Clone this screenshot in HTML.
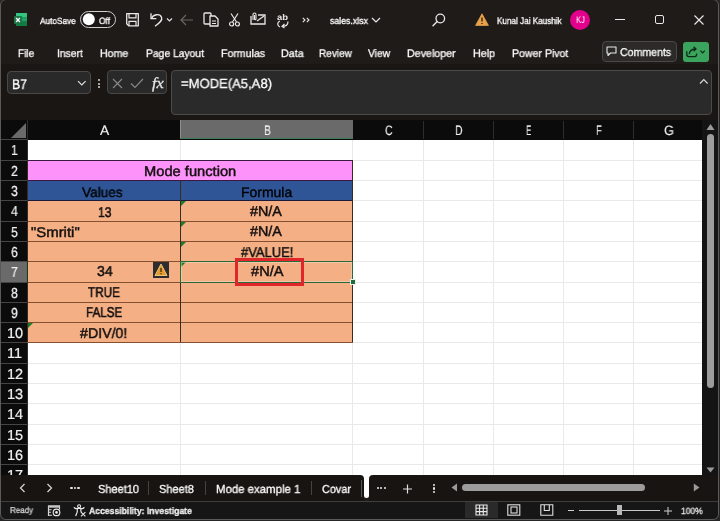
<!DOCTYPE html>
<html><head><meta charset="utf-8"><style>
html,body{margin:0;padding:0;}
body{width:720px;height:521px;position:relative;overflow:hidden;font-family:"Liberation Sans",sans-serif;text-rendering:geometricPrecision;}
div{position:absolute;}
.t{white-space:nowrap;will-change:transform;}
svg{overflow:visible;}
</style></head><body>
<div class="" style="left:0px;top:0px;width:720px;height:521px;background:#262626;"></div>
<div class="" style="left:0px;top:-1px;width:719px;height:521px;background:#1f1b18;border:1px solid #5c5a58;border-radius:6px;box-sizing:border-box;overflow:hidden;"></div>
<svg style="position:absolute;left:13px;top:12px;" width="15" height="15" viewBox="0 0 15 15"><rect x="3" y="1" width="11" height="13" rx="1" fill="#185c37"/><rect x="3" y="1" width="11" height="4.3" fill="#33c481" /><rect x="3" y="5.3" width="11" height="4.3" fill="#21a366" /><rect x="3" y="9.6" width="11" height="4.4" fill="#107c41" /><rect x="1" y="4" width="8" height="8" rx="0.8" fill="#1a7443"/><path d="M3.1 6 L6.9 10 M6.9 6 L3.1 10" stroke="#fff" stroke-width="1.3"/></svg>
<div class="t" style="left:39.60px;top:15.89px;font-size:9.01px;line-height:10.36px;color:#ffffff;font-weight:normal;font-style:normal;font-family:'Liberation Sans',sans-serif;transform:scaleX(0.9162);transform-origin:0 0;-webkit-text-stroke:0.3px currentColor;">AutoSave</div>
<div class="" style="left:80px;top:11px;width:36px;height:17px;border:1.5px solid #cfcfcf;border-radius:9px;box-sizing:border-box;background:#1a1716;"></div>
<svg style="position:absolute;left:82px;top:13px;" width="14" height="13" viewBox="0 0 14 13"><circle cx="6.8" cy="6.2" r="6" fill="#fff"/></svg>
<div class="t" style="left:99.10px;top:15.76px;font-size:9.16px;line-height:10.53px;color:#ffffff;font-weight:normal;font-style:normal;font-family:'Liberation Sans',sans-serif;transform:scaleX(0.9197);transform-origin:0 0;-webkit-text-stroke:0.3px currentColor;">Off</div>
<svg style="position:absolute;left:126px;top:12px;" width="14" height="15" viewBox="0 0 14 15"><path d="M0.7 1.7 H12.3 V13.8 H2.7 L0.7 11.8 Z" fill="none" stroke="#e8e8e8" stroke-width="1.3" stroke-linejoin="round"/><path d="M3 1.7 V5.8 H10 V1.7" fill="none" stroke="#e8e8e8" stroke-width="1.2"/><path d="M3 13.8 V9.3 H10 V13.8" fill="none" stroke="#e8e8e8" stroke-width="1.2"/></svg>
<svg style="position:absolute;left:148px;top:12px;" width="16" height="15" viewBox="0 0 16 15"><path d="M3.6 6.3 C5 2.2 12 1.2 13.6 5.5 C14.6 8.2 12 10.5 7 14.3" fill="none" stroke="#e8e8e8" stroke-width="1.3"/><path d="M3 1.2 V6.6 H8.3" fill="none" stroke="#e8e8e8" stroke-width="1.3"/></svg>
<svg style="position:absolute;left:166px;top:17px;" width="8" height="6" viewBox="0 0 8 6"><path d="M1 1.5 L3.5 4 L6 1.5" fill="none" stroke="#e0e0e0" stroke-width="1.2"/></svg>
<svg style="position:absolute;left:180px;top:14px;" width="14" height="12" viewBox="0 0 14 12"><path d="M1 6 H13 M6 1 L1 6 L6 11" fill="none" stroke="#6a6664" stroke-width="1.2"/></svg>
<svg style="position:absolute;left:203px;top:12px;" width="16" height="15" viewBox="0 0 16 15"><rect x="1" y="1" width="7" height="11" rx="1" fill="none" stroke="#e8e8e8" stroke-width="1.3"/><path d="M7 4 H12 L15 7 V14 H7 Z" fill="#1f1b18" stroke="#e8e8e8" stroke-width="1.3" stroke-linejoin="round"/><path d="M9 9 H13 M9 11.5 H13" stroke="#e8e8e8" stroke-width="1"/></svg>
<svg style="position:absolute;left:229px;top:13px;" width="11" height="14" viewBox="0 0 11 14"><path d="M2 0.5 L7.5 9 M9 0.5 L3.5 9" stroke="#e8e8e8" stroke-width="1.2" fill="none"/><circle cx="2.6" cy="11" r="2" fill="none" stroke="#e8e8e8" stroke-width="1.2"/><circle cx="8.4" cy="11" r="2" fill="none" stroke="#e8e8e8" stroke-width="1.2"/></svg>
<svg style="position:absolute;left:250px;top:12px;" width="16" height="13" viewBox="0 0 16 13"><path d="M1 4 V12 H15 V3 H8" fill="none" stroke="#e8e8e8" stroke-width="1.3"/><path d="M7 9 L14 4" stroke="#e8e8e8" stroke-width="1.2"/><path d="M3 8 V2.5 C3 0.5 6 0.5 6 2.5 V7 C6 8 4.5 8 4.5 7 V3" fill="none" stroke="#e8e8e8" stroke-width="1.1"/></svg>
<div class="t" style="left:277.00px;top:12.93px;font-size:8.43px;line-height:9.69px;color:#e8e8e8;font-weight:bold;font-style:normal;font-family:'Liberation Sans',sans-serif;transform:scaleX(1.1181);transform-origin:0 0;">ab</div>
<svg style="position:absolute;left:276px;top:20px;" width="13" height="8" viewBox="0 0 13 8"><path d="M4 1 C1 2 1 6 4 7" fill="none" stroke="#e8e8e8" stroke-width="1.2"/><path d="M12 1.5 C12 5 10 6.5 6 6.5 M8.5 4 L6 6.5 L8.5 8" fill="none" stroke="#e8e8e8" stroke-width="1.2"/></svg>
<svg style="position:absolute;left:302px;top:17px;" width="8" height="6" viewBox="0 0 8 6"><path d="M0.8 0.8 L3 3 L0.8 5.2 M4.8 0.8 L7 3 L4.8 5.2" fill="none" stroke="#e8e8e8" stroke-width="1.1"/></svg>
<div class="t" style="left:329.70px;top:16.46px;font-size:9.59px;line-height:11.03px;color:#ffffff;font-weight:normal;font-style:normal;font-family:'Liberation Sans',sans-serif;transform:scaleX(0.9140);transform-origin:0 0;-webkit-text-stroke:0.3px currentColor;">sales.xlsx</div>
<svg style="position:absolute;left:371px;top:17px;" width="10" height="6" viewBox="0 0 10 6"><path d="M1 1 L5 5 L9 1" fill="none" stroke="#e8e8e8" stroke-width="1.2"/></svg>
<svg style="position:absolute;left:432px;top:13px;" width="14" height="14" viewBox="0 0 14 14"><circle cx="8.3" cy="5.5" r="4.3" fill="none" stroke="#e8e8e8" stroke-width="1.3"/><path d="M5.2 8.6 L1 12.8" stroke="#e8e8e8" stroke-width="1.4" stroke-linecap="round"/></svg>
<svg style="position:absolute;left:475px;top:13px;" width="14" height="13" viewBox="0 0 14 13"><path d="M7 0.8 L13.4 12.4 H0.6 Z" fill="#e8a24a" stroke="#e8a24a" stroke-width="0.8" stroke-linejoin="round"/><path d="M7 4.5 V8.5 M7 10 V11" stroke="#2a1a0a" stroke-width="1.3"/></svg>
<div class="t" style="left:497.40px;top:16.79px;font-size:9.45px;line-height:10.86px;color:#ffffff;font-weight:normal;font-style:normal;font-family:'Liberation Sans',sans-serif;transform:scaleX(0.8613);transform-origin:0 0;-webkit-text-stroke:0.3px currentColor;">Kunal Jai Kaushik</div>
<svg style="position:absolute;left:570px;top:10px;" width="20" height="20" viewBox="0 0 20 20"><circle cx="10" cy="10" r="10" fill="#e3008c"/></svg>
<div class="t" style="left:575.50px;top:16.19px;font-size:9.45px;line-height:10.86px;color:#fff;font-weight:normal;font-style:normal;font-family:'Liberation Sans',sans-serif;transform:scaleX(0.8163);transform-origin:0 0;">KJ</div>
<div class="" style="left:615px;top:19px;width:10px;height:1px;background:#e8e8e8;"></div>
<div class="" style="left:655px;top:15px;width:9px;height:9px;border:1.2px solid #e8e8e8;border-radius:2px;box-sizing:border-box;"></div>
<svg style="position:absolute;left:694px;top:15px;" width="10" height="10" viewBox="0 0 10 10"><path d="M0.5 0.5 L9.5 9.5 M9.5 0.5 L0.5 9.5" stroke="#e8e8e8" stroke-width="1.15"/></svg>
<div class="t" style="left:18.30px;top:48.35px;font-size:10.90px;line-height:12.54px;color:#fcfcfc;font-weight:normal;font-style:normal;font-family:'Liberation Sans',sans-serif;transform:scaleX(0.9225);transform-origin:0 0;-webkit-text-stroke:0.3px currentColor;">File</div>
<div class="t" style="left:56.70px;top:48.35px;font-size:10.90px;line-height:12.54px;color:#fcfcfc;font-weight:normal;font-style:normal;font-family:'Liberation Sans',sans-serif;transform:scaleX(0.9463);transform-origin:0 0;-webkit-text-stroke:0.3px currentColor;">Insert</div>
<div class="t" style="left:100.00px;top:48.35px;font-size:10.90px;line-height:12.54px;color:#fcfcfc;font-weight:normal;font-style:normal;font-family:'Liberation Sans',sans-serif;transform:scaleX(0.9730);transform-origin:0 0;-webkit-text-stroke:0.3px currentColor;">Home</div>
<div class="t" style="left:146.00px;top:48.35px;font-size:10.90px;line-height:12.54px;color:#fcfcfc;font-weight:normal;font-style:normal;font-family:'Liberation Sans',sans-serif;transform:scaleX(0.9474);transform-origin:0 0;-webkit-text-stroke:0.3px currentColor;">Page Layout</div>
<div class="t" style="left:221.00px;top:48.35px;font-size:10.90px;line-height:12.54px;color:#fcfcfc;font-weight:normal;font-style:normal;font-family:'Liberation Sans',sans-serif;transform:scaleX(0.9684);transform-origin:0 0;-webkit-text-stroke:0.3px currentColor;">Formulas</div>
<div class="t" style="left:280.70px;top:48.35px;font-size:10.90px;line-height:12.54px;color:#fcfcfc;font-weight:normal;font-style:normal;font-family:'Liberation Sans',sans-serif;transform:scaleX(0.9812);transform-origin:0 0;-webkit-text-stroke:0.3px currentColor;">Data</div>
<div class="t" style="left:318.60px;top:48.35px;font-size:10.90px;line-height:12.54px;color:#fcfcfc;font-weight:normal;font-style:normal;font-family:'Liberation Sans',sans-serif;transform:scaleX(0.9224);transform-origin:0 0;-webkit-text-stroke:0.3px currentColor;">Review</div>
<div class="t" style="left:368.30px;top:48.35px;font-size:10.90px;line-height:12.54px;color:#fcfcfc;font-weight:normal;font-style:normal;font-family:'Liberation Sans',sans-serif;transform:scaleX(0.9463);transform-origin:0 0;-webkit-text-stroke:0.3px currentColor;">View</div>
<div class="t" style="left:407.20px;top:48.35px;font-size:10.90px;line-height:12.54px;color:#fcfcfc;font-weight:normal;font-style:normal;font-family:'Liberation Sans',sans-serif;transform:scaleX(0.9801);transform-origin:0 0;-webkit-text-stroke:0.3px currentColor;">Developer</div>
<div class="t" style="left:472.60px;top:48.35px;font-size:10.90px;line-height:12.54px;color:#fcfcfc;font-weight:normal;font-style:normal;font-family:'Liberation Sans',sans-serif;transform:scaleX(0.9856);transform-origin:0 0;-webkit-text-stroke:0.3px currentColor;">Help</div>
<div class="t" style="left:511.50px;top:48.35px;font-size:10.90px;line-height:12.54px;color:#fcfcfc;font-weight:normal;font-style:normal;font-family:'Liberation Sans',sans-serif;transform:scaleX(0.9698);transform-origin:0 0;-webkit-text-stroke:0.3px currentColor;">Power Pivot</div>
<div class="" style="left:602px;top:41px;width:75px;height:21px;background:#2c2a29;border:1px solid #4a4846;border-radius:4px;box-sizing:border-box;"></div>
<svg style="position:absolute;left:606px;top:46px;" width="11" height="11" viewBox="0 0 11 11"><path d="M1 1 H10 V7 H4.5 L2 9.5 V7 H1 Z" fill="none" stroke="#e8e8e8" stroke-width="1.1" stroke-linejoin="round"/></svg>
<div class="t" style="left:620.20px;top:46.85px;font-size:11.34px;line-height:13.04px;color:#fcfcfc;font-weight:normal;font-style:normal;font-family:'Liberation Sans',sans-serif;transform:scaleX(0.9340);transform-origin:0 0;-webkit-text-stroke:0.3px currentColor;">Comments</div>
<div class="" style="left:683px;top:42px;width:26px;height:20px;background:#3ba55d;border-radius:3px;"></div>
<svg style="position:absolute;left:684px;top:44px;" width="24" height="16" viewBox="0 0 24 16"><path d="M2.8 7.2 V10.6 Q2.8 12.6 4.8 12.6 H10.6 Q12.6 12.6 12.6 10.6 V9.6" fill="none" stroke="#0e2a16" stroke-width="1.3"/><path d="M5.2 10.2 C5.6 6.6 8 5 11.8 5 M9.6 2.7 L12 5 L9.6 7.3" fill="none" stroke="#0e2a16" stroke-width="1.3"/><path d="M16.4 6.6 L18.6 8.8 L20.8 6.6" fill="none" stroke="#0e2a16" stroke-width="1.2"/></svg>
<div class="" style="left:1px;top:64px;width:717px;height:56px;background:#1a1613;"></div>
<div class="" style="left:7px;top:71px;width:84px;height:23px;background:#2a2929;border:1px solid #4a4848;border-radius:4px;box-sizing:border-box;"></div>
<div class="t" style="left:11.70px;top:75.73px;font-size:13.95px;line-height:16.05px;color:#ffffff;font-weight:normal;font-style:normal;font-family:'Liberation Sans',sans-serif;transform:scaleX(0.8790);transform-origin:0 0;-webkit-text-stroke:0.3px currentColor;">B7</div>
<svg style="position:absolute;left:77px;top:80px;" width="10" height="7" viewBox="0 0 10 7"><path d="M1 1.2 L4.8 5 L8.6 1.2" fill="none" stroke="#e0e0e0" stroke-width="1.2"/></svg>
<div class="" style="left:98px;top:79px;width:2px;height:2px;background:#d8d8d8;border-radius:1px;"></div>
<div class="" style="left:98px;top:82.5px;width:2px;height:2px;background:#d8d8d8;border-radius:1px;"></div>
<div class="" style="left:98px;top:86px;width:2px;height:2px;background:#d8d8d8;border-radius:1px;"></div>
<div class="" style="left:107px;top:70px;width:60px;height:24px;background:#2a2929;border:1px solid #484646;border-radius:4px;box-sizing:border-box;"></div>
<svg style="position:absolute;left:112px;top:78px;" width="11" height="11" viewBox="0 0 11 11"><path d="M1 1 L10 10 M10 1 L1 10" stroke="#8c8a88" stroke-width="1.1"/></svg>
<svg style="position:absolute;left:130px;top:78px;" width="14" height="11" viewBox="0 0 14 11"><path d="M1 5.5 L5 9.5 L13 1" fill="none" stroke="#8c8a88" stroke-width="1.1"/></svg>
<div class="t" style="left:151.50px;top:74.63px;font-size:15.26px;line-height:17.55px;color:#e4e4e4;font-weight:normal;font-style:italic;font-family:'Liberation Serif',serif;transform:scaleX(1.0709);transform-origin:0 0;-webkit-text-stroke:0.3px currentColor;">fx</div>
<div class="" style="left:171px;top:70px;width:541px;height:45px;background:#2a2a2a;border:1px solid #4d4b4a;border-radius:4px;box-sizing:border-box;"></div>
<div class="t" style="left:180.80px;top:76.20px;font-size:13.23px;line-height:15.21px;color:#ffffff;font-weight:normal;font-style:normal;font-family:'Liberation Sans',sans-serif;transform:scaleX(0.9876);transform-origin:0 0;-webkit-text-stroke:0.3px currentColor;">=MODE(A5,A8)</div>
<svg style="position:absolute;left:699px;top:78px;" width="10" height="7" viewBox="0 0 10 7"><path d="M1 5.5 L4.8 1.7 L8.6 5.5" fill="none" stroke="#d8d8d8" stroke-width="1.2"/></svg>
<div class="" style="left:1px;top:120px;width:701px;height:355px;background:#0b0b0b;"></div>
<div class="" style="left:28px;top:140px;width:674px;height:335px;background:#ffffff;"></div>
<div class="" style="left:180px;top:120px;width:173px;height:19px;background:#6a6a6a;border-left:1px solid #8e8e8e;box-sizing:border-box;"></div>
<div class="" style="left:180px;top:138px;width:173px;height:1px;background:#3f7a58;"></div>
<div class="" style="left:1px;top:139px;width:27px;height:1px;background:#454545;"></div>
<div class="" style="left:1px;top:160px;width:27px;height:1px;background:#454545;"></div>
<div class="" style="left:1px;top:180px;width:27px;height:1px;background:#454545;"></div>
<div class="" style="left:1px;top:200px;width:27px;height:1px;background:#454545;"></div>
<div class="" style="left:1px;top:221px;width:27px;height:1px;background:#454545;"></div>
<div class="" style="left:1px;top:241px;width:27px;height:1px;background:#454545;"></div>
<div class="" style="left:1px;top:261px;width:27px;height:1px;background:#454545;"></div>
<div class="" style="left:1px;top:282px;width:27px;height:1px;background:#454545;"></div>
<div class="" style="left:1px;top:302px;width:27px;height:1px;background:#454545;"></div>
<div class="" style="left:1px;top:322px;width:27px;height:1px;background:#454545;"></div>
<div class="" style="left:1px;top:342px;width:27px;height:1px;background:#454545;"></div>
<div class="" style="left:1px;top:363px;width:27px;height:1px;background:#454545;"></div>
<div class="" style="left:1px;top:383px;width:27px;height:1px;background:#454545;"></div>
<div class="" style="left:1px;top:403px;width:27px;height:1px;background:#454545;"></div>
<div class="" style="left:1px;top:424px;width:27px;height:1px;background:#454545;"></div>
<div class="" style="left:1px;top:444px;width:27px;height:1px;background:#454545;"></div>
<div class="" style="left:1px;top:464px;width:27px;height:1px;background:#454545;"></div>
<div class="" style="left:423px;top:121px;width:1px;height:18px;background:#2d2d2d;"></div>
<div class="" style="left:493px;top:121px;width:1px;height:18px;background:#2d2d2d;"></div>
<div class="" style="left:563px;top:121px;width:1px;height:18px;background:#2d2d2d;"></div>
<div class="" style="left:633px;top:121px;width:1px;height:18px;background:#2d2d2d;"></div>
<div class="" style="left:703px;top:121px;width:1px;height:18px;background:#2d2d2d;"></div>
<div class="" style="left:27px;top:120px;width:1px;height:355px;background:#2d2d2d;"></div>
<svg style="position:absolute;left:10px;top:122px;" width="17" height="17" viewBox="0 0 17 17"><path d="M16 1 V16 H1 Z" fill="#6a6a6a"/></svg>
<div class="t" style="left:99.70px;top:123.30px;font-size:13.66px;line-height:15.71px;color:#f4f4f4;font-weight:normal;font-style:normal;font-family:'Liberation Sans',sans-serif;transform:scaleX(1.0095);transform-origin:0 0;-webkit-text-stroke:0.1px currentColor;">A</div>
<div class="t" style="left:263.60px;top:123.30px;font-size:13.66px;line-height:15.71px;color:#f4f4f4;font-weight:normal;font-style:normal;font-family:'Liberation Sans',sans-serif;transform:scaleX(0.7681);transform-origin:0 0;-webkit-text-stroke:0.1px currentColor;">B</div>
<div class="t" style="left:384.50px;top:123.30px;font-size:13.66px;line-height:15.71px;color:#f4f4f4;font-weight:normal;font-style:normal;font-family:'Liberation Sans',sans-serif;transform:scaleX(0.7806);transform-origin:0 0;-webkit-text-stroke:0.1px currentColor;">C</div>
<div class="t" style="left:454.80px;top:123.30px;font-size:13.66px;line-height:15.71px;color:#f4f4f4;font-weight:normal;font-style:normal;font-family:'Liberation Sans',sans-serif;transform:scaleX(0.7704);transform-origin:0 0;-webkit-text-stroke:0.1px currentColor;">D</div>
<div class="t" style="left:526.25px;top:123.30px;font-size:13.66px;line-height:15.71px;color:#f4f4f4;font-weight:normal;font-style:normal;font-family:'Liberation Sans',sans-serif;transform:scaleX(0.5761);transform-origin:0 0;-webkit-text-stroke:0.1px currentColor;">E</div>
<div class="t" style="left:596.25px;top:123.30px;font-size:13.66px;line-height:15.71px;color:#f4f4f4;font-weight:normal;font-style:normal;font-family:'Liberation Sans',sans-serif;transform:scaleX(0.6888);transform-origin:0 0;-webkit-text-stroke:0.1px currentColor;">F</div>
<div class="t" style="left:663.75px;top:123.30px;font-size:13.66px;line-height:15.71px;color:#f4f4f4;font-weight:normal;font-style:normal;font-family:'Liberation Sans',sans-serif;transform:scaleX(0.9408);transform-origin:0 0;-webkit-text-stroke:0.1px currentColor;">G</div>
<div class="" style="left:1px;top:262px;width:26px;height:20px;background:#6a6a6a;"></div>
<div class="" style="left:26px;top:262px;width:1px;height:20px;background:#3f7a58;"></div>
<div class="t" style="left:11.27px;top:143.20px;font-size:14.53px;line-height:16.72px;color:#f0f0f0;font-weight:normal;font-style:normal;font-family:'Liberation Sans',sans-serif;transform:scaleX(0.8500);transform-origin:0 0;-webkit-text-stroke:0.2px currentColor;">1</div>
<div class="t" style="left:11.27px;top:164.20px;font-size:14.53px;line-height:16.72px;color:#f0f0f0;font-weight:normal;font-style:normal;font-family:'Liberation Sans',sans-serif;transform:scaleX(0.8500);transform-origin:0 0;-webkit-text-stroke:0.2px currentColor;">2</div>
<div class="t" style="left:11.27px;top:184.20px;font-size:14.53px;line-height:16.72px;color:#f0f0f0;font-weight:normal;font-style:normal;font-family:'Liberation Sans',sans-serif;transform:scaleX(0.8500);transform-origin:0 0;-webkit-text-stroke:0.2px currentColor;">3</div>
<div class="t" style="left:11.27px;top:204.20px;font-size:14.53px;line-height:16.72px;color:#f0f0f0;font-weight:normal;font-style:normal;font-family:'Liberation Sans',sans-serif;transform:scaleX(0.8500);transform-origin:0 0;-webkit-text-stroke:0.2px currentColor;">4</div>
<div class="t" style="left:11.27px;top:225.20px;font-size:14.53px;line-height:16.72px;color:#f0f0f0;font-weight:normal;font-style:normal;font-family:'Liberation Sans',sans-serif;transform:scaleX(0.8500);transform-origin:0 0;-webkit-text-stroke:0.2px currentColor;">5</div>
<div class="t" style="left:11.27px;top:245.20px;font-size:14.53px;line-height:16.72px;color:#f0f0f0;font-weight:normal;font-style:normal;font-family:'Liberation Sans',sans-serif;transform:scaleX(0.8500);transform-origin:0 0;-webkit-text-stroke:0.2px currentColor;">6</div>
<div class="t" style="left:11.27px;top:265.20px;font-size:14.53px;line-height:16.72px;color:#f0f0f0;font-weight:normal;font-style:normal;font-family:'Liberation Sans',sans-serif;transform:scaleX(0.8500);transform-origin:0 0;-webkit-text-stroke:0.2px currentColor;">7</div>
<div class="t" style="left:11.27px;top:286.20px;font-size:14.53px;line-height:16.72px;color:#f0f0f0;font-weight:normal;font-style:normal;font-family:'Liberation Sans',sans-serif;transform:scaleX(0.8500);transform-origin:0 0;-webkit-text-stroke:0.2px currentColor;">8</div>
<div class="t" style="left:11.27px;top:306.20px;font-size:14.53px;line-height:16.72px;color:#f0f0f0;font-weight:normal;font-style:normal;font-family:'Liberation Sans',sans-serif;transform:scaleX(0.8500);transform-origin:0 0;-webkit-text-stroke:0.2px currentColor;">9</div>
<div class="t" style="left:6.62px;top:326.20px;font-size:14.53px;line-height:16.72px;color:#f0f0f0;font-weight:normal;font-style:normal;font-family:'Liberation Sans',sans-serif;transform:scaleX(1.0000);transform-origin:0 0;-webkit-text-stroke:0.2px currentColor;">10</div>
<div class="t" style="left:7.16px;top:346.20px;font-size:14.53px;line-height:16.72px;color:#f0f0f0;font-weight:normal;font-style:normal;font-family:'Liberation Sans',sans-serif;transform:scaleX(1.0000);transform-origin:0 0;-webkit-text-stroke:0.2px currentColor;">11</div>
<div class="t" style="left:6.62px;top:367.20px;font-size:14.53px;line-height:16.72px;color:#f0f0f0;font-weight:normal;font-style:normal;font-family:'Liberation Sans',sans-serif;transform:scaleX(1.0000);transform-origin:0 0;-webkit-text-stroke:0.2px currentColor;">12</div>
<div class="t" style="left:6.62px;top:387.20px;font-size:14.53px;line-height:16.72px;color:#f0f0f0;font-weight:normal;font-style:normal;font-family:'Liberation Sans',sans-serif;transform:scaleX(1.0000);transform-origin:0 0;-webkit-text-stroke:0.2px currentColor;">13</div>
<div class="t" style="left:6.62px;top:407.20px;font-size:14.53px;line-height:16.72px;color:#f0f0f0;font-weight:normal;font-style:normal;font-family:'Liberation Sans',sans-serif;transform:scaleX(1.0000);transform-origin:0 0;-webkit-text-stroke:0.2px currentColor;">14</div>
<div class="t" style="left:6.62px;top:428.20px;font-size:14.53px;line-height:16.72px;color:#f0f0f0;font-weight:normal;font-style:normal;font-family:'Liberation Sans',sans-serif;transform:scaleX(1.0000);transform-origin:0 0;-webkit-text-stroke:0.2px currentColor;">15</div>
<div class="t" style="left:6.62px;top:448.20px;font-size:14.53px;line-height:16.72px;color:#f0f0f0;font-weight:normal;font-style:normal;font-family:'Liberation Sans',sans-serif;transform:scaleX(1.0000);transform-origin:0 0;-webkit-text-stroke:0.2px currentColor;">16</div>
<div class="t" style="left:6.62px;top:468.20px;font-size:14.53px;line-height:16.72px;color:#f0f0f0;font-weight:normal;font-style:normal;font-family:'Liberation Sans',sans-serif;transform:scaleX(1.0000);transform-origin:0 0;-webkit-text-stroke:0.2px currentColor;">17</div>
<div class="" style="left:28px;top:160px;width:674px;height:1px;background:#e9e9e9;"></div>
<div class="" style="left:28px;top:180px;width:674px;height:1px;background:#e9e9e9;"></div>
<div class="" style="left:28px;top:200px;width:674px;height:1px;background:#e9e9e9;"></div>
<div class="" style="left:28px;top:221px;width:674px;height:1px;background:#e9e9e9;"></div>
<div class="" style="left:28px;top:241px;width:674px;height:1px;background:#e9e9e9;"></div>
<div class="" style="left:28px;top:261px;width:674px;height:1px;background:#e9e9e9;"></div>
<div class="" style="left:28px;top:282px;width:674px;height:1px;background:#e9e9e9;"></div>
<div class="" style="left:28px;top:302px;width:674px;height:1px;background:#e9e9e9;"></div>
<div class="" style="left:28px;top:322px;width:674px;height:1px;background:#e9e9e9;"></div>
<div class="" style="left:28px;top:342px;width:674px;height:1px;background:#e9e9e9;"></div>
<div class="" style="left:28px;top:363px;width:674px;height:1px;background:#e9e9e9;"></div>
<div class="" style="left:28px;top:383px;width:674px;height:1px;background:#e9e9e9;"></div>
<div class="" style="left:28px;top:403px;width:674px;height:1px;background:#e9e9e9;"></div>
<div class="" style="left:28px;top:424px;width:674px;height:1px;background:#e9e9e9;"></div>
<div class="" style="left:28px;top:444px;width:674px;height:1px;background:#e9e9e9;"></div>
<div class="" style="left:28px;top:464px;width:674px;height:1px;background:#e9e9e9;"></div>
<div class="" style="left:180px;top:140px;width:1px;height:335px;background:#e9e9e9;"></div>
<div class="" style="left:352px;top:140px;width:1px;height:335px;background:#e9e9e9;"></div>
<div class="" style="left:423px;top:140px;width:1px;height:335px;background:#e9e9e9;"></div>
<div class="" style="left:493px;top:140px;width:1px;height:335px;background:#e9e9e9;"></div>
<div class="" style="left:563px;top:140px;width:1px;height:335px;background:#e9e9e9;"></div>
<div class="" style="left:633px;top:140px;width:1px;height:335px;background:#e9e9e9;"></div>
<div class="" style="left:27px;top:160px;width:326px;height:21px;background:#fd93fa;"></div>
<div class="" style="left:27px;top:180px;width:326px;height:21px;background:#2f5597;"></div>
<div class="" style="left:27px;top:200px;width:326px;height:22px;background:#f4b084;"></div>
<div class="" style="left:27px;top:221px;width:326px;height:21px;background:#f4b084;"></div>
<div class="" style="left:27px;top:241px;width:326px;height:21px;background:#f4b084;"></div>
<div class="" style="left:27px;top:261px;width:326px;height:22px;background:#f4b084;"></div>
<div class="" style="left:27px;top:282px;width:326px;height:21px;background:#f4b084;"></div>
<div class="" style="left:27px;top:302px;width:326px;height:21px;background:#f4b084;"></div>
<div class="" style="left:27px;top:322px;width:326px;height:21px;background:#f4b084;"></div>
<div class="" style="left:27px;top:160px;width:326px;height:1px;background:#3a1a40;"></div>
<div class="" style="left:27px;top:180px;width:326px;height:1px;background:#3a1a40;"></div>
<div class="" style="left:27px;top:200px;width:326px;height:1px;background:#1a1a3a;"></div>
<div class="" style="left:27px;top:221px;width:326px;height:1px;background:#84502f;"></div>
<div class="" style="left:27px;top:241px;width:326px;height:1px;background:#84502f;"></div>
<div class="" style="left:27px;top:261px;width:326px;height:1px;background:#84502f;"></div>
<div class="" style="left:27px;top:282px;width:326px;height:1px;background:#84502f;"></div>
<div class="" style="left:27px;top:302px;width:326px;height:1px;background:#84502f;"></div>
<div class="" style="left:27px;top:322px;width:326px;height:1px;background:#84502f;"></div>
<div class="" style="left:27px;top:342px;width:326px;height:1px;background:#84502f;"></div>
<div class="" style="left:27px;top:160px;width:1px;height:182px;background:#3a2a24;"></div>
<div class="" style="left:352px;top:160px;width:1px;height:182px;background:#3a2a24;"></div>
<div class="" style="left:180px;top:180px;width:1px;height:162px;background:#3a2a24;"></div>
<div class="t" style="left:144.40px;top:163.10px;font-size:14.10px;line-height:16.21px;color:#151010;font-weight:normal;font-style:normal;font-family:'Liberation Sans',sans-serif;transform:scaleX(1.0421);transform-origin:0 0;-webkit-text-stroke:0.45px currentColor;">Mode function</div>
<div class="t" style="left:82.40px;top:184.13px;font-size:13.95px;line-height:16.05px;color:#000;font-weight:normal;font-style:normal;font-family:'Liberation Sans',sans-serif;transform:scaleX(0.9802);transform-origin:0 0;-webkit-text-stroke:0.35px #000;">Values</div>
<div class="t" style="left:240.50px;top:184.13px;font-size:13.95px;line-height:16.05px;color:#000;font-weight:normal;font-style:normal;font-family:'Liberation Sans',sans-serif;transform:scaleX(1.0023);transform-origin:0 0;-webkit-text-stroke:0.35px #000;">Formula</div>
<div class="t" style="left:97.70px;top:203.90px;font-size:14.10px;line-height:16.21px;color:#151010;font-weight:normal;font-style:normal;font-family:'Liberation Sans',sans-serif;transform:scaleX(0.8643);transform-origin:0 0;-webkit-text-stroke:0.55px currentColor;">13</div>
<div class="t" style="left:250.30px;top:204.17px;font-size:14.24px;line-height:16.38px;color:#151010;font-weight:normal;font-style:normal;font-family:'Liberation Sans',sans-serif;transform:scaleX(1.0074);transform-origin:0 0;-webkit-text-stroke:0.45px currentColor;">#N/A</div>
<div class="t" style="left:30.80px;top:224.10px;font-size:14.10px;line-height:16.21px;color:#151010;font-weight:normal;font-style:normal;font-family:'Liberation Sans',sans-serif;transform:scaleX(1.0579);transform-origin:0 0;-webkit-text-stroke:0.45px currentColor;">&quot;Smriti&quot;</div>
<div class="t" style="left:250.30px;top:224.47px;font-size:14.24px;line-height:16.38px;color:#151010;font-weight:normal;font-style:normal;font-family:'Liberation Sans',sans-serif;transform:scaleX(1.0074);transform-origin:0 0;-webkit-text-stroke:0.45px currentColor;">#N/A</div>
<div class="t" style="left:241.00px;top:244.77px;font-size:14.24px;line-height:16.38px;color:#151010;font-weight:normal;font-style:normal;font-family:'Liberation Sans',sans-serif;transform:scaleX(0.9125);transform-origin:0 0;-webkit-text-stroke:0.45px currentColor;">#VALUE!</div>
<div class="t" style="left:96.50px;top:264.47px;font-size:14.24px;line-height:16.38px;color:#151010;font-weight:normal;font-style:normal;font-family:'Liberation Sans',sans-serif;transform:scaleX(0.9849);transform-origin:0 0;-webkit-text-stroke:0.45px currentColor;">34</div>
<div class="t" style="left:250.60px;top:264.47px;font-size:14.24px;line-height:16.38px;color:#151010;font-weight:normal;font-style:normal;font-family:'Liberation Sans',sans-serif;transform:scaleX(1.0264);transform-origin:0 0;-webkit-text-stroke:0.45px currentColor;">#N/A</div>
<div class="t" style="left:87.90px;top:285.07px;font-size:14.24px;line-height:16.38px;color:#151010;font-weight:normal;font-style:normal;font-family:'Liberation Sans',sans-serif;transform:scaleX(0.8253);transform-origin:0 0;-webkit-text-stroke:0.55px currentColor;">TRUE</div>
<div class="t" style="left:85.90px;top:305.37px;font-size:14.24px;line-height:16.38px;color:#151010;font-weight:normal;font-style:normal;font-family:'Liberation Sans',sans-serif;transform:scaleX(0.8186);transform-origin:0 0;-webkit-text-stroke:0.55px currentColor;">FALSE</div>
<div class="t" style="left:80.40px;top:325.67px;font-size:14.24px;line-height:16.38px;color:#151010;font-weight:normal;font-style:normal;font-family:'Liberation Sans',sans-serif;transform:scaleX(0.9957);transform-origin:0 0;-webkit-text-stroke:0.45px currentColor;">#DIV/0!</div>
<svg style="position:absolute;left:181px;top:201px;" width="6" height="6" viewBox="0 0 6 6"><path d="M0 0 H5 L0 5 Z" fill="#1e7a2a"/></svg>
<svg style="position:absolute;left:181px;top:222px;" width="6" height="6" viewBox="0 0 6 6"><path d="M0 0 H5 L0 5 Z" fill="#1e7a2a"/></svg>
<svg style="position:absolute;left:181px;top:242px;" width="6" height="6" viewBox="0 0 6 6"><path d="M0 0 H5 L0 5 Z" fill="#1e7a2a"/></svg>
<svg style="position:absolute;left:181px;top:262px;" width="6" height="6" viewBox="0 0 6 6"><path d="M0 0 H5 L0 5 Z" fill="#1e7a2a"/></svg>
<svg style="position:absolute;left:28px;top:323px;" width="6" height="6" viewBox="0 0 6 6"><path d="M0 0 H5 L0 5 Z" fill="#1e7a2a"/></svg>
<div class="" style="left:153px;top:262px;width:16px;height:16px;background:#2e2c2c;"></div>
<svg style="position:absolute;left:153px;top:262px;" width="16" height="16" viewBox="0 0 16 16"><path d="M8 2 L14 13.5 H2 Z" fill="#e39b2d" stroke="#f3d08a" stroke-width="0.9" stroke-linejoin="round"/><path d="M8 6 V10 M8 11.3 V12.3" stroke="#3a2000" stroke-width="1.2"/></svg>
<div class="" style="left:180px;top:261px;width:173px;height:22px;border:1px solid #2a6a3a;box-sizing:border-box;"></div>
<div class="" style="left:181px;top:262px;width:171px;height:20px;border:1px solid #e8e0c8;box-sizing:border-box;opacity:0.5;"></div>
<div class="" style="left:350px;top:279px;width:6px;height:6px;background:#f0f0f0;"></div>
<div class="" style="left:351px;top:280px;width:4px;height:4px;background:#1d6b3a;"></div>
<div class="" style="left:235px;top:258px;width:69px;height:28px;border:3px solid #e0262a;box-sizing:border-box;"></div>
<div class="" style="left:702px;top:120px;width:16px;height:355px;background:#141414;"></div>
<svg style="position:absolute;left:706px;top:123px;" width="9" height="8" viewBox="0 0 9 8"><path d="M4.5 1 L8.5 7 H0.5 Z" fill="#9a9a9a"/></svg>
<div class="" style="left:707px;top:134px;width:7px;height:254px;background:#9c9c9c;border-radius:3.5px;"></div>
<svg style="position:absolute;left:706px;top:467px;" width="9" height="6" viewBox="0 0 9 6"><path d="M0.5 0.5 H8.5 L4.5 5.5 Z" fill="#9a9a9a"/></svg>
<div class="" style="left:355px;top:474px;width:24px;height:8px;background:#ffffff;"></div>
<div class="" style="left:1px;top:475px;width:363px;height:26px;background:#181411;border-top-right-radius:4px;"></div>
<div class="" style="left:364px;top:475px;width:5px;height:23px;background:#ffffff;border-bottom-left-radius:3px;border-bottom-right-radius:3px;"></div>
<div class="" style="left:369px;top:475px;width:349px;height:26px;background:#181411;border-top-left-radius:4px;"></div>
<svg style="position:absolute;left:19px;top:483px;" width="7" height="10" viewBox="0 0 7 10"><path d="M5.5 1 L1.5 5 L5.5 9" fill="none" stroke="#d8d8d8" stroke-width="1.2"/></svg>
<svg style="position:absolute;left:46px;top:483px;" width="7" height="10" viewBox="0 0 7 10"><path d="M1.5 1 L5.5 5 L1.5 9" fill="none" stroke="#d8d8d8" stroke-width="1.2"/></svg>
<div class="" style="left:70.3px;top:486.8px;width:2.4px;height:2.4px;background:#e8e8e8;border-radius:50%;"></div>
<div class="" style="left:73.8px;top:486.8px;width:2.4px;height:2.4px;background:#e8e8e8;border-radius:50%;"></div>
<div class="" style="left:77.3px;top:486.8px;width:2.4px;height:2.4px;background:#e8e8e8;border-radius:50%;"></div>
<div class="t" style="left:98.25px;top:483.18px;font-size:11.63px;line-height:13.37px;color:#fcfcfc;font-weight:normal;font-style:normal;font-family:'Liberation Sans',sans-serif;transform:scaleX(0.9463);transform-origin:0 0;-webkit-text-stroke:0.3px currentColor;">Sheet10</div>
<div class="" style="left:148px;top:481px;width:1px;height:14px;background:#444;"></div>
<div class="t" style="left:159.40px;top:483.18px;font-size:11.63px;line-height:13.37px;color:#fcfcfc;font-weight:normal;font-style:normal;font-family:'Liberation Sans',sans-serif;transform:scaleX(0.9444);transform-origin:0 0;-webkit-text-stroke:0.3px currentColor;">Sheet8</div>
<div class="" style="left:205px;top:481px;width:1px;height:14px;background:#444;"></div>
<div class="t" style="left:215.60px;top:483.18px;font-size:11.63px;line-height:13.37px;color:#fcfcfc;font-weight:normal;font-style:normal;font-family:'Liberation Sans',sans-serif;transform:scaleX(0.9818);transform-origin:0 0;-webkit-text-stroke:0.3px currentColor;">Mode example 1</div>
<div class="" style="left:311px;top:481px;width:1px;height:14px;background:#444;"></div>
<div class="t" style="left:321.70px;top:483.18px;font-size:11.63px;line-height:13.37px;color:#fcfcfc;font-weight:normal;font-style:normal;font-family:'Liberation Sans',sans-serif;transform:scaleX(0.9316);transform-origin:0 0;-webkit-text-stroke:0.3px currentColor;">Covar</div>
<div class="" style="left:361px;top:480px;width:1px;height:17px;background:#555;"></div>
<div class="" style="left:376.6px;top:486.8px;width:2.4px;height:2.4px;background:#e8e8e8;border-radius:50%;"></div>
<div class="" style="left:380.1px;top:486.8px;width:2.4px;height:2.4px;background:#e8e8e8;border-radius:50%;"></div>
<div class="" style="left:383.6px;top:486.8px;width:2.4px;height:2.4px;background:#e8e8e8;border-radius:50%;"></div>
<svg style="position:absolute;left:402px;top:484px;" width="11" height="10" viewBox="0 0 11 10"><path d="M5.5 0.5 V9.5 M1 5 H10" stroke="#e0e0e0" stroke-width="1.2"/></svg>
<div class="" style="left:432.8px;top:483.8px;width:2.4px;height:2.4px;background:#e8e8e8;border-radius:50%;"></div>
<div class="" style="left:432.8px;top:487.3px;width:2.4px;height:2.4px;background:#e8e8e8;border-radius:50%;"></div>
<div class="" style="left:432.8px;top:490.8px;width:2.4px;height:2.4px;background:#e8e8e8;border-radius:50%;"></div>
<svg style="position:absolute;left:451px;top:483px;" width="7" height="9" viewBox="0 0 7 9"><path d="M6 0.5 V8.5 L0.5 4.5 Z" fill="#9a9a9a"/></svg>
<div class="" style="left:462px;top:484px;width:183px;height:7px;background:#9c9c9c;border-radius:3.5px;"></div>
<svg style="position:absolute;left:693px;top:483px;" width="7" height="9" viewBox="0 0 7 9"><path d="M0.8 0.5 V8.5 L6.5 4.5 Z" fill="#9a9a9a"/></svg>
<div class="" style="left:1px;top:501px;width:717px;height:1px;background:#3e3e3e;"></div>
<div class="" style="left:1px;top:502px;width:717px;height:17px;background:#161616;border-bottom-left-radius:6px;border-bottom-right-radius:6px;"></div>
<div class="t" style="left:10.20px;top:506.49px;font-size:8.58px;line-height:9.86px;color:#cfcfcf;font-weight:normal;font-style:normal;font-family:'Liberation Sans',sans-serif;transform:scaleX(0.9318);transform-origin:0 0;-webkit-text-stroke:0.3px currentColor;">Ready</div>
<svg style="position:absolute;left:47px;top:505px;" width="14" height="12" viewBox="0 0 14 12"><path d="M1.5 11 V1 H12.5 V4.5" fill="none" stroke="#d8d8d8" stroke-width="1.2"/><rect x="1" y="0.5" width="12" height="2.2" fill="#c8c8c8"/><path d="M2 4.8 H4.6 M2 7.2 H4 M1.5 10.2 H5" stroke="#d8d8d8" stroke-width="1.1"/><circle cx="9.5" cy="7.4" r="3.3" fill="#161616" stroke="#e4e4e4" stroke-width="1.2"/><circle cx="9.5" cy="7.4" r="1.3" fill="#f0f0f0"/></svg>
<svg style="position:absolute;left:73px;top:504px;" width="14" height="13" viewBox="0 0 14 13"><circle cx="6.1" cy="2.2" r="1.5" fill="none" stroke="#ececec" stroke-width="1.1"/><path d="M1.3 3.6 C2.5 5.5 4 4.3 6.1 4.3 C8.2 4.3 9.8 5.5 11 3.6 M4.3 4.6 C4.8 7 4.3 9 2.8 11.6 M7.9 4.6 C7.6 6.5 7.8 7.5 8.3 8.3" fill="none" stroke="#ececec" stroke-width="1.2" stroke-linecap="round"/><path d="M8 8.2 L12.4 12.4 M12.4 8.2 L8 12.4" stroke="#ececec" stroke-width="1.1"/></svg>
<div class="t" style="left:88.50px;top:506.02px;font-size:9.30px;line-height:10.70px;color:#f0f0f0;font-weight:bold;font-style:normal;font-family:'Liberation Sans',sans-serif;transform:scaleX(0.9257);transform-origin:0 0;-webkit-text-stroke:0.3px currentColor;">Accessibility: Investigate</div>
<div class="" style="left:465px;top:502px;width:33px;height:16px;background:#2a2a2a;"></div>
<svg style="position:absolute;left:475px;top:504px;" width="13" height="12" viewBox="0 0 13 12"><path d="M1 1 H12 V11 H1 Z M1 4.3 H12 M1 7.6 H12 M4.6 1 V11 M8.3 1 V11" fill="none" stroke="#e8e8e8" stroke-width="1.1"/></svg>
<svg style="position:absolute;left:507px;top:504px;" width="14" height="12" viewBox="0 0 14 12"><rect x="0.8" y="0.8" width="12" height="10.4" fill="none" stroke="#e0e0e0" stroke-width="1.1"/><rect x="4" y="3" width="6" height="6" fill="none" stroke="#e0e0e0" stroke-width="1.1"/></svg>
<svg style="position:absolute;left:540px;top:504px;" width="14" height="12" viewBox="0 0 14 12"><path d="M0.8 0.8 H12.8 V11.2 H0.8 Z M4.3 0.8 V6.5 H9.3 V0.8" fill="none" stroke="#e0e0e0" stroke-width="1.1"/></svg>
<div class="" style="left:568px;top:510px;width:6px;height:1px;background:#d0d0d0;"></div>
<div class="" style="left:579px;top:510px;width:81px;height:1px;background:#c8c8c8;"></div>
<div class="" style="left:617px;top:505px;width:5px;height:10px;background:#b8b8b8;"></div>
<svg style="position:absolute;left:664px;top:507px;" width="8" height="8" viewBox="0 0 8 8"><path d="M4 0 V8 M0 4 H8" stroke="#d0d0d0" stroke-width="1"/></svg>
<div class="t" style="left:681.00px;top:506.39px;font-size:9.01px;line-height:10.36px;color:#e0e0e0;font-weight:normal;font-style:normal;font-family:'Liberation Sans',sans-serif;transform:scaleX(0.9414);transform-origin:0 0;-webkit-text-stroke:0.3px currentColor;">100%</div>
</body></html>
